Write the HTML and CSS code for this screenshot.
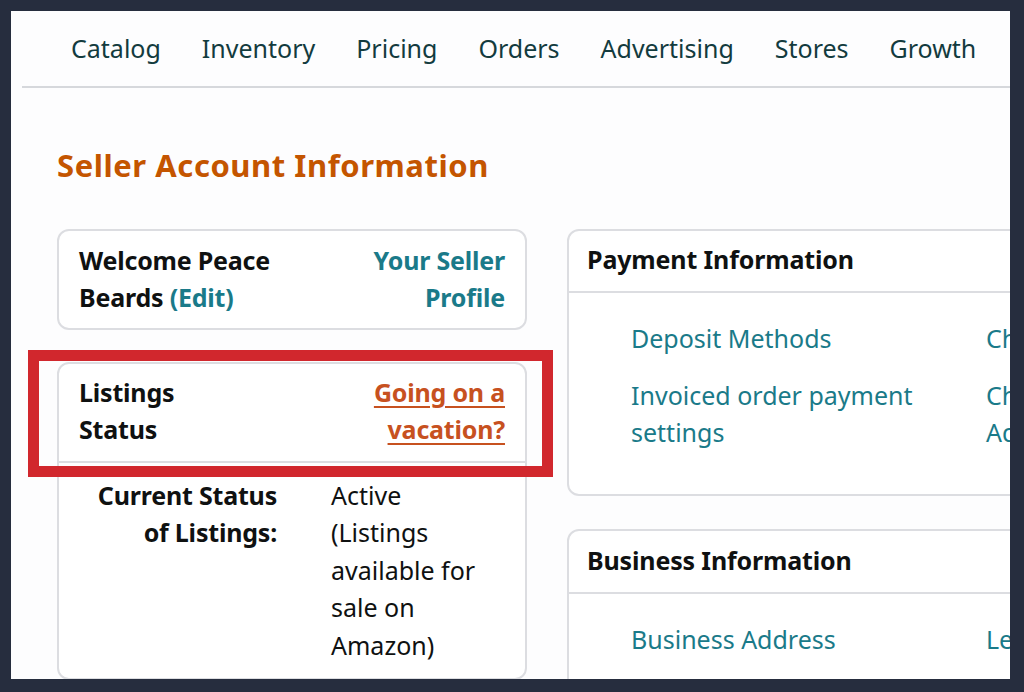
FILE: index.html
```html
<!DOCTYPE html>
<html lang="en">
<head>
<meta charset="utf-8">
<title>Seller Account Information</title>
<link rel="stylesheet" href="styles.css">
</head>
<body>
<div class="window">
  <nav class="topnav">
    <a class="nav-item">Catalog</a>
    <a class="nav-item">Inventory</a>
    <a class="nav-item">Pricing</a>
    <a class="nav-item">Orders</a>
    <a class="nav-item">Advertising</a>
    <a class="nav-item">Stores</a>
    <a class="nav-item">Growth</a>
  </nav>
  <main class="content">
    <h1 class="title">Seller Account Information</h1>
    <div class="columns">
      <div class="col col-left">
        <section class="card welcome">
          <div class="welcome-name">Welcome Peace Beards <a class="link">(Edit)</a></div>
          <a class="link welcome-profile">Your Seller Profile</a>
        </section>
        <section class="card listings">
          <div class="listings-head">
            <div class="listings-title">Listings Status</div>
            <a class="vacation">Going on a vacation?</a>
          </div>
          <div class="listings-body">
            <div class="status-label">Current Status of Listings:</div>
            <div class="status-value">
              <span class="status-line">Active</span>
              <span class="status-line">(Listings available for sale on Amazon)</span>
            </div>
          </div>
        </section>
      </div>
      <div class="col col-right">
        <section class="card info">
          <h2 class="info-head">Payment Information</h2>
          <div class="info-body">
            <ul class="info-list">
              <li><a class="link">Deposit Methods</a></li>
              <li><a class="link">Invoiced order payment settings</a></li>
            </ul>
            <ul class="info-list">
              <li><a class="link">Charge Methods</a></li>
              <li><a class="link">Charge Methods for Advertising</a></li>
            </ul>
          </div>
        </section>
        <section class="card info business">
          <h2 class="info-head">Business Information</h2>
          <div class="info-body">
            <ul class="info-list">
              <li><a class="link">Business Address</a></li>
            </ul>
            <ul class="info-list">
              <li><a class="link">Legal Entity</a></li>
            </ul>
          </div>
        </section>
      </div>
    </div>
  </main>
  <div class="highlight"></div>
</div>
</body>
</html>
```

FILE: styles.css
```css
* { box-sizing: border-box; }

html, body {
  margin: 0;
  padding: 0;
}

body {
  background: #262d3e;
  width: 1024px;
  height: 692px;
  overflow: hidden;
  font-family: "Noto Sans", "Open Sans", sans-serif;
  color: #0f1111;
  padding: 11px 0 0 11px;
}

.window {
  position: relative;
  width: 999px;
  height: 668px;
  background: #fdfdfe;
  overflow: hidden;
}

/* top navigation */
.topnav {
  display: flex;
  gap: 41px;
  margin-left: 11px;
  padding: 19px 0 18px 49px;
  border-bottom: 2px solid #d6d8dc;
  white-space: nowrap;
  font-size: 25px;
  line-height: 37.5px;
}

.nav-item {
  color: #133b3e;
  text-decoration: none;
}

/* content */
.content {
  padding-left: 46px;
}

.title {
  margin: 57px 0 44px;
  font-size: 31px;
  line-height: 40px;
  letter-spacing: 0.55px;
  font-weight: 700;
  color: #c45500;
}

.columns {
  display: flex;
  gap: 40px;
  align-items: flex-start;
}

.col {
  flex-shrink: 0;
  display: flex;
  flex-direction: column;
}

.col-left { width: 470px; gap: 32px; }
.col-right { width: 700px; gap: 33px; }

.card {
  border: 2px solid #dcdde1;
  border-radius: 12px;
  background: #ffffff;
  font-size: 25px;
  line-height: 37.5px;
}

.link {
  color: #1a7a89;
  text-decoration: none;
}

/* welcome card */
.welcome {
  display: flex;
  justify-content: space-between;
  padding: 11px 20px;
  font-weight: 700;
  letter-spacing: -0.2px;
}

.welcome-name { width: 220px; }

.welcome-profile {
  width: 200px;
  text-align: right;
}

/* listings card */
.listings {
  height: 318px;
}

.listings-head {
  display: flex;
  justify-content: space-between;
  padding: 10px 20px 12px;
  border-bottom: 2px solid #dcdde1;
  font-weight: 700;
  letter-spacing: -0.2px;
}

.listings-title { width: 160px; }

.vacation {
  width: 220px;
  text-align: right;
  color: #c7511f;
  text-decoration: underline;
  text-underline-offset: 4px;
  text-decoration-thickness: 2px;
}

.listings-body {
  display: grid;
  grid-template-columns: 198px 1fr;
  column-gap: 54px;
  padding: 14px 20px;
}

.status-label {
  text-align: right;
  font-weight: 700;
  letter-spacing: -0.2px;
}

.status-line { display: block; }

/* info cards */
.info-head {
  margin: 0;
  padding: 10px 18px 13px;
  border-bottom: 2px solid #dcdde1;
  font-size: 25px;
  line-height: 37.5px;
  font-weight: 700;
  letter-spacing: -0.15px;
}

.business .info-head { padding-top: 11px; }

.info-body {
  display: grid;
  grid-template-columns: 331px 250px;
  column-gap: 24px;
  padding: 27px 20px 23px 62px;
}

.business .info-body { padding-top: 27px; }

.info-list {
  margin: 0;
  padding: 0;
  list-style: none;
}

.info-list li { margin-bottom: 19px; }

/* annotation overlay */
.highlight {
  position: absolute;
  left: 17px;
  top: 339px;
  width: 525px;
  height: 127px;
  border: 11px solid #d1272d;
  pointer-events: none;
}
```
